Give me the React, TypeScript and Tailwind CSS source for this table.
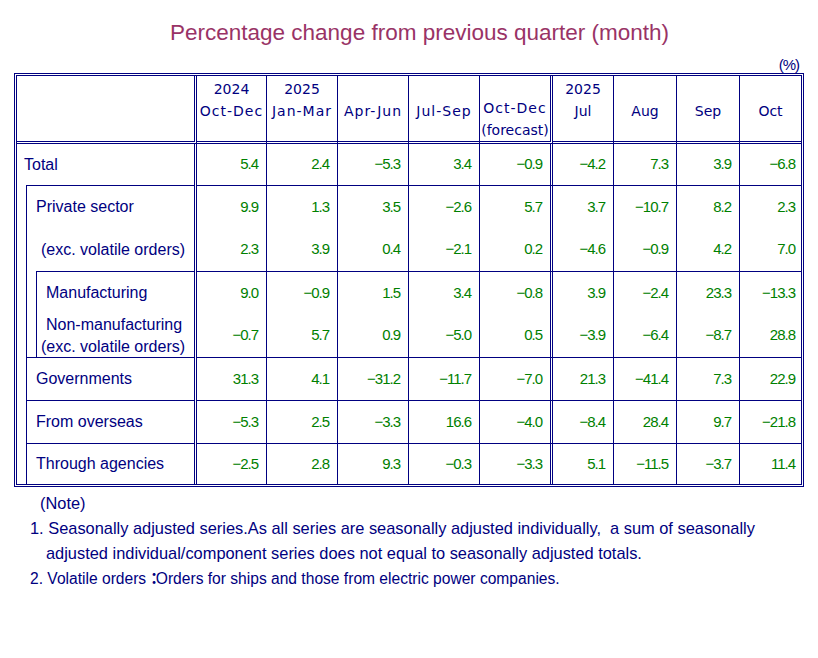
const NAVY = "border-[#000080]";

const headers: string[][] = [
  ["2024", "Oct-Dec"],
  ["2025", "Jan-Mar"],
  ["", "Apr-Jun"],
  ["", "Jul-Sep"],
  ["", "Oct-Dec", "(forecast)"],
  ["2025", "Jul"],
  ["", "Aug"],
  ["", "Sep"],
  ["", "Oct"],
];

// b = line under the row in the data columns
const rows: { v: string[]; b: boolean }[] = [
  { v: ["5.4", "2.4", "−5.3", "3.4", "−0.9", "−4.2", "7.3", "3.9", "−6.8"], b: true },
  { v: ["9.9", "1.3", "3.5", "−2.6", "5.7", "3.7", "−10.7", "8.2", "2.3"], b: false },
  { v: ["2.3", "3.9", "0.4", "−2.1", "0.2", "−4.6", "−0.9", "4.2", "7.0"], b: true },
  { v: ["9.0", "−0.9", "1.5", "3.4", "−0.8", "3.9", "−2.4", "23.3", "−13.3"], b: false },
  { v: ["−0.7", "5.7", "0.9", "−5.0", "0.5", "−3.9", "−6.4", "−8.7", "28.8"], b: true },
  { v: ["31.3", "4.1", "−31.2", "−11.7", "−7.0", "21.3", "−41.4", "7.3", "22.9"], b: true },
  { v: ["−5.3", "2.5", "−3.3", "16.6", "−4.0", "−8.4", "28.4", "9.7", "−21.8"], b: true },
  { v: ["−2.5", "2.8", "9.3", "−0.3", "−3.3", "5.1", "−11.5", "−3.7", "11.4"], b: false },
];

const rightBorder = (i: number) =>
  i === 4 ? "border-r-[3px]" : i === 8 ? "" : "border-r";

const LabelColumn = () => (
  <div className="row-span-8 flex flex-col border-r-[3px] border-double border-[#000080] text-[16px] text-[#000080]">
    <div className="h-[41px] shrink-0 flex items-center pl-[7px]">Total</div>
    <div className="flex flex-1">
      <div className="w-[9px] shrink-0" />
      <div className={`flex-1 flex flex-col border-l border-t ${NAVY}`}>
        <div className="h-[42px] flex items-center pl-[9px]">Private sector</div>
        <div className="h-[43px] flex items-center pl-[14px]">(exc. volatile orders)</div>
        <div className="flex">
          <div className="w-[9px] shrink-0" />
          <div className={`flex-1 border-l border-t ${NAVY}`}>
            <div className="h-[42px] flex items-center pl-[9px]">Manufacturing</div>
            <div className="h-[43px] leading-[22px]">
              <div className="pl-[9px]">Non-manufacturing</div>
              <div className="pl-[4px] whitespace-nowrap">(exc. volatile orders)</div>
            </div>
          </div>
        </div>
        <div className={`h-[43px] flex items-center pl-[9px] border-t ${NAVY}`}>Governments</div>
        <div className={`h-[43px] flex items-center pl-[9px] border-t ${NAVY}`}>From overseas</div>
        <div className={`h-[41px] flex items-center pl-[9px] border-t ${NAVY}`}>Through agencies</div>
      </div>
    </div>
  </div>
);

export default function App() {
  return (
    <div className="w-[818px] min-h-[658px] bg-white font-['Liberation_Sans',Arial,sans-serif]">
      <div className="pt-[20px] pl-[170px] h-[46px] text-[22.5px] leading-[26px] text-[#993366]">
        Percentage change from previous quarter (month)
      </div>

      <div className="ml-[14px] w-[790px]">
        <div className="h-[27px] flex items-end justify-end pr-[5px] text-[15px] leading-[17px] tracking-[-1px] text-[#000080]">
          (%)
        </div>

        <div className="grid grid-cols-[180px_70px_71px_71px_71px_73px_61px_63px_63px_61px] grid-rows-[68px_42px_42px_44px_42px_44px_43px_43px_40px] border-[3px] border-double border-[#000080]">
          {/* header row */}
          <div className="border-r-[3px] border-b-[3px] border-double border-[#000080]" />
          {headers.map((h, i) => (
            <div
              key={i}
              className={`flex flex-col items-center pt-[2px] leading-[22px] text-[14px] text-[#000080] font-['DejaVu_Sans',sans-serif] border-b-[3px] border-double border-[#000080] ${rightBorder(i)}`}
            >
              <span className="h-[22px]">{h[0]}</span>
              <span className={h[1].includes("-") ? "tracking-[1px]" : ""}>{h[1]}</span>
              {h[2] && <span>{h[2]}</span>}
            </div>
          ))}

          <LabelColumn />

          {rows.map((r, ri) =>
            r.v.map((val, ci) => (
              <div
                key={`${ri}-${ci}`}
                className={`flex items-center justify-end ${ci === 8 ? "pr-[6px]" : "pr-[8px]"} text-[15px] tracking-[-1px] text-[#008000] border-double border-[#000080] ${rightBorder(ci)} ${r.b ? "border-b" : ""}`}
              >
                {val}
              </div>
            ))
          )}
        </div>
      </div>

      <div className="mt-[4px] text-[16.4px] leading-[25px] text-[#000080] font-['Liberation_Sans','Noto_Sans_CJK_JP',sans-serif]">
        <div className="pl-[40px]">(Note)</div>
        <div className="pl-[30px] whitespace-pre">1. Seasonally adjusted series.As all series are seasonally adjusted individually,  a sum of seasonally</div>
        <div className="pl-[46px]">adjusted individual/component series does not equal to seasonally adjusted totals.</div>
        <div className="pl-[30px] text-[15.6px]">
          2. Volatile orders<span className="font-bold tracking-[-7px] mr-[1px]">：</span>Orders for ships and those from electric power companies.
        </div>
      </div>
    </div>
  );
}
